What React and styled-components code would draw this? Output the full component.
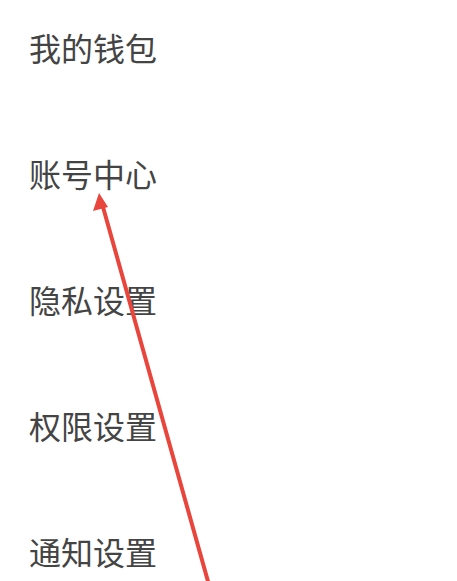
import styled, { createGlobalStyle } from "styled-components";

const GlobalStyle = createGlobalStyle`
  html, body {
    margin: 0;
    padding: 0;
    background: #ffffff;
  }
`;

const Screen = styled.div`
  position: relative;
  width: 457px;
  height: 581px;
  overflow: hidden;
  background: #ffffff;
  font-family: "Noto Sans CJK SC", "Noto Sans", sans-serif;
`;

const MenuList = styled.ul`
  list-style: none;
  margin: 0;
  padding: 31px 0 0 29px;
  display: flex;
  flex-direction: column;
  gap: 94px;
`;

const MenuItem = styled.li`
  font-size: 32px;
  line-height: 32px;
  height: 32px;
  color: #444444;
  letter-spacing: 0;
`;

const ArrowLayer = styled.svg`
  position: absolute;
  left: 0;
  top: 0;
  pointer-events: none;
`;

const items = ["我的钱包", "账号中心", "隐私设置", "权限设置", "通知设置"];

function PointerArrow() {
  // tip at (99,193), tail runs off the bottom edge
  return (
    <ArrowLayer width="457" height="581" viewBox="0 0 457 581">
      <line
        x1="209"
        y1="585"
        x2="103"
        y2="207"
        stroke="#e8453c"
        strokeWidth="4"
        strokeLinecap="round"
      />
      <polygon points="99,193 93,211 108,207" fill="#e8453c" />
    </ArrowLayer>
  );
}

export default function App() {
  return (
    <>
      <GlobalStyle />
      <Screen>
        <MenuList>
          {items.map((label) => (
            <MenuItem key={label}>{label}</MenuItem>
          ))}
        </MenuList>
        <PointerArrow />
      </Screen>
    </>
  );
}
